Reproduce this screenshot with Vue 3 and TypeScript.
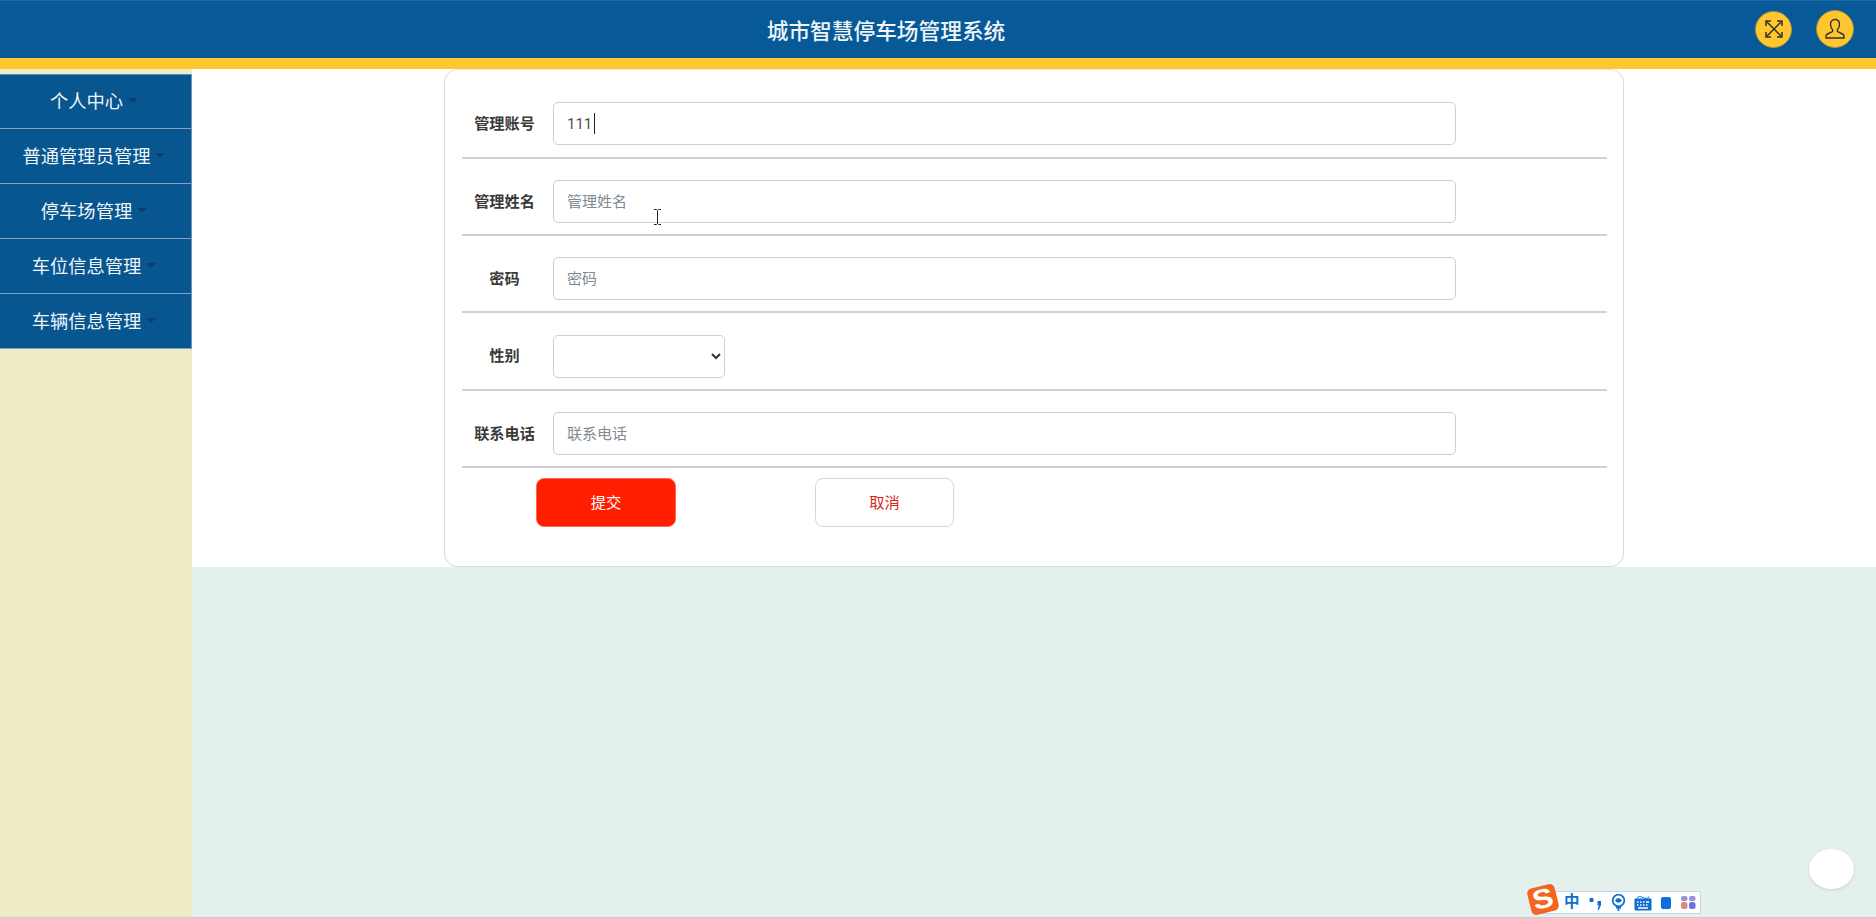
<script setup lang="ts">
import { ref } from 'vue'

const menu = ['个人中心', '普通管理员管理', '停车场管理', '车位信息管理', '车辆信息管理']
const rows = [
  { label: '管理账号', placeholder: '管理账号', value: '111' },
  { label: '管理姓名', placeholder: '管理姓名', value: '' },
  { label: '密码', placeholder: '密码', value: '' },
  { label: '性别', placeholder: '', value: '', select: true },
  { label: '联系电话', placeholder: '联系电话', value: '' },
]
const form = ref(rows)
</script>

<template>
  <div class="page">
    <header class="top">
      <h1 class="title">城市智慧停车场管理系统</h1>
      <div class="top-actions">
        <button class="round">
          <svg width="24" height="24" viewBox="0 0 24 24" fill="none" stroke="#33302a" stroke-width="1.5">
            <path d="M5 5l14 14M19 5L5 19" />
            <path d="M4 9V4h5M15 4h5v5M20 15v5h-5M9 20H4v-5" />
          </svg>
        </button>
        <button class="round big">
          <svg width="26" height="26" viewBox="0 0 26 26" fill="none" stroke="#33302a" stroke-width="1.4">
            <path d="M13 3.500c-3 0-4.500 2.200-4.500 5 0 2.200 1 4 2 5.200.5.700.3 1.800-.6 2.200L5.500 18c-1 .5-1.500 1.200-1.500 2.300v1.700h18v-1.700c0-1.100-.5-1.800-1.500-2.300l-4.400-2.100c-.9-.4-1.100-1.500-.6-2.200 1-1.200 2-3 2-5.200 0-2.800-1.500-5-4.500-5z" />
          </svg>
        </button>
      </div>
    </header>
    <div class="stripe"></div>

    <div class="body">
      <aside class="side">
        <nav class="menu">
          <a v-for="item in menu" :key="item" class="menu-item">
            {{ item }}<span class="caret"></span>
          </a>
        </nav>
      </aside>

      <main class="content">
        <section class="panel">
          <form class="card" @submit.prevent>
            <div v-for="row in form" :key="row.label" class="row">
              <label class="label">{{ row.label }}</label>
              <select v-if="row.select" class="select"></select>
              <div v-else class="field">
                <input class="input" :placeholder="row.placeholder" :value="row.value" />
                <span v-if="row.value" class="text-caret"></span>
              </div>
            </div>
            <div class="actions">
              <button class="btn primary" type="button">提交</button>
              <button class="btn ghost" type="button">取消</button>
            </div>
          </form>
        </section>
      </main>
    </div>

    <svg class="ibeam" width="9" height="16" viewBox="0 0 9 16" fill="none" stroke="#222" stroke-width="1">
      <path d="M1 .5h2.500L4.500 1.500l1-1H8M4.500 1.500v13M1 15.500h2.500l1-1 1 1H8" />
    </svg>

    <div class="bubble"></div>

    <div class="ime">
      <span class="ime-logo"><span class="ime-s">S</span></span>
      <span class="ime-zh">中</span>
      <svg width="14" height="16" viewBox="0 0 14 16" fill="#0d6fd0" class="ime-icon i-comma">
        <circle cx="2.500" cy="5" r="2.200" />
        <path d="M8.500 6h3.500v4L9.800 15l-1.300-.6L10 10.500H8.500z" />
      </svg>
      <svg width="15" height="18" viewBox="0 0 15 18" fill="none" stroke="#0d6fd0" class="ime-icon i-globe">
        <circle cx="7.500" cy="6.500" r="5.800" stroke-width="1.800" />
        <path d="M4.500 6.500c1-2.500 4.500-2.500 6 0-1 2-4.500 2.500-6 0z" fill="#0d6fd0" stroke-width="1" />
        <path d="M5 13.500h5M7.500 13v4" stroke-width="1.800" />
      </svg>
      <svg width="18" height="16" viewBox="0 0 18 16" class="ime-icon i-kb">
        <path d="M3 3.500C3 1.500 6 1 9 2.500s6 1 6-1" fill="none" stroke="#0d6fd0" stroke-width="1" />
        <rect x=".5" y="3.500" width="17" height="12" rx="1" fill="#0d6fd0" />
        <path d="M3 7h1.500M6 7h1.500M9 7h1.500M12 7h3M3 10h1.500M6 10h1.500M9 10h1.500M12 10h1.500M4 13h10" stroke="#fff" stroke-width="1.300" />
      </svg>
      <span class="ime-cell"></span>
      <svg width="15" height="13" viewBox="0 0 15 13" class="ime-icon i-pair">
        <rect x="0" y="0" width="6.500" height="5" rx="2" fill="#9d8fd8" />
        <rect x="8" y="0" width="6.500" height="5" rx="2" fill="#9d8fd8" />
        <rect x="0" y="6" width="6.500" height="7" rx="2.500" fill="#d98a7c" />
        <rect x="8" y="6" width="6.500" height="7" rx="2.500" fill="#6d72e0" />
      </svg>
    </div>
  </div>
</template>

<style>
html, body { margin: 0; padding: 0; background: #e4f0eb; }
</style>

<style scoped>
.page {
  position: relative;
  display: flex;
  flex-direction: column;
  height: 918px;
  overflow: hidden;
  background: #e4f0eb;
  border-bottom: 1px solid #c9cdcb;
  box-sizing: border-box;
  font-family: Roboto, "Noto Sans CJK SC", sans-serif;
}
.top {
  flex: none;
  height: 58px;
  background: #075998;
  display: flex;
  align-items: center;
  justify-content: center;
  position: relative;
  border-top: 1px solid #1b6aa5;
  box-sizing: border-box;
}
.title {
  margin: 0;
  color: #eef4f8;
  font-size: 21.700px;
  font-weight: 500;
  transform: translateX(-52px);
}
.top-actions {
  position: absolute;
  right: 22px;
  top: 9px;
  display: flex;
  align-items: center;
  gap: 24px;
}
.round {
  width: 37px;
  height: 37px;
  border: 1px solid #a98e3a;
  border-radius: 50%;
  background: #ffc72f;
  padding: 0;
  display: flex;
  align-items: center;
  justify-content: center;
  box-sizing: border-box;
}
.round.big { width: 38px; height: 38px; }
.stripe {
  flex: none;
  height: 11px;
  background: #ffc72f;
}
.body {
  flex: 1;
  display: flex;
  min-height: 0;
}
.side {
  flex: none;
  width: 192px;
  background: #eeecc4;
  padding-top: 5px;
  box-sizing: border-box;
}
.menu {
  background: #07568f;
  border-right: 1px solid #6c97bb;
  box-shadow: inset 0 1px 0 #5d8cb3;
}
.menu-item {
  display: block;
  height: 55px;
  line-height: 56px;
  padding-right: 3px;
  text-align: center;
  color: #f0f5f9;
  font-size: 18.300px;
  border-bottom: 1px solid #7ea3c3;
  box-sizing: border-box;
}
.caret {
  display: inline-block;
  width: 0;
  height: 0;
  margin-left: 5px;
  vertical-align: 5px;
  border-top: 5px solid #0e3d6c;
  border-left: 5px solid transparent;
  border-right: 5px solid transparent;
}
.content {
  flex: 1;
  min-width: 0;
}
.panel {
  background: #fff;
  padding-left: 252px;
}
.card {
  width: 1180px;
  height: 498px;
  box-sizing: border-box;
  padding: 11.200px 16px 0 17px;
  background: #fff;
  border: 1px solid #d9d9d9;
  border-top-color: #e6e6e6;
  border-radius: 14px;
}
.row {
  display: flex;
  align-items: flex-start;
  height: 77.400px;
  padding-top: 21px;
  box-sizing: border-box;
  border-bottom: 2px solid #d2d2d2;
}
.label {
  flex: none;
  width: 85px;
  margin-right: 6px;
  text-align: center;
  font-size: 15.200px;
  font-weight: 700;
  line-height: 44px;
  color: #3a3a3a;
}
.field {
  position: relative;
  width: 903px;
}
.input {
  display: block;
  width: 100%;
  height: 43px;
  box-sizing: border-box;
  padding: 1px 13px 0;
  border: 1px solid #cfcfcf;
  border-radius: 5px;
  font: inherit;
  font-size: 15px;
  color: #495057;
  background: #fff;
  outline: none;
}
.input::placeholder { color: #808a93; opacity: 1; }
.text-caret {
  position: absolute;
  left: 41px;
  top: 11px;
  width: 1px;
  height: 21px;
  background: #222;
}
.select {
  width: 172px;
  height: 43px;
  margin-top: 0.500px;
  border: 1px solid #cfcfcf;
  border-radius: 5px;
  background: #fff;
  box-sizing: border-box;
  font-size: 15px;
  color: #333;
}
.actions {
  display: flex;
  padding: 10px 0 0 74px;
  gap: 140px;
}
.btn {
  height: 49px;
  border-radius: 8px;
  font-family: inherit;
  font-size: 15.300px;
  padding: 0 0 4px;
}
.primary {
  width: 140px;
  background: #ff1e00;
  border: 1px solid #ff6a55;
  color: #fff;
}
.ghost {
  width: 139px;
  margin-left: -1px;
  background: #fff;
  border: 1px solid #d8d8d8;
  color: #d7261a;
}
.ibeam {
  position: absolute;
  left: 653px;
  top: 209px;
}
.bubble {
  position: absolute;
  left: 1809px;
  top: 849px;
  width: 45px;
  height: 40px;
  border-radius: 50%;
  background: #fff;
  box-shadow: 0 1px 3px #c8d3ce;
}
.ime {
  position: absolute;
  left: 1536px;
  top: 891px;
  width: 165px;
  height: 23px;
  padding-left: 27px;
  box-sizing: border-box;
  display: flex;
  align-items: center;
  background: #fff;
  border: 1px solid #c5d6ea;
  border-radius: 2px;
}
.ime-logo {
  position: absolute;
  left: -8px;
  top: -6px;
  width: 28px;
  height: 27px;
  border-radius: 5px;
  background: #f6651f;
  transform: rotate(-14deg);
  display: flex;
  align-items: center;
  justify-content: center;
}
.ime-s {
  color: #fff;
  font-family: "Liberation Sans", sans-serif;
  font-size: 27px;
  font-weight: 700;
  line-height: 1;
  transform: scaleX(1.150);
}
.ime-zh {
  color: #0d6fd0;
  font-size: 15.500px;
  font-weight: 700;
  line-height: 1;
}
.ime-icon { flex: none; display: block; }
.i-comma { margin-left: 9px; }
.i-globe { margin-left: 8px; }
.i-kb { margin-left: 8px; }
.i-pair { margin-left: 10px; }
.ime-cell {
  width: 10px;
  height: 12px;
  border-radius: 2px;
  background: #0d6fe0;
  margin-left: 9px;
}
</style>
